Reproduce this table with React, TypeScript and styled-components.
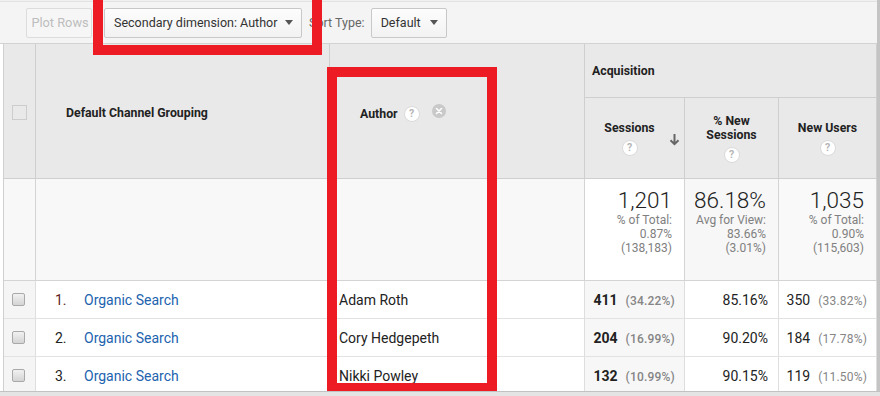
import React from 'react';
import styled, { createGlobalStyle } from 'styled-components';

const Global = createGlobalStyle`
  html, body { margin: 0; padding: 0; background: #fff; }
  body {
    font-family: Roboto, "Liberation Sans", Arial, sans-serif;
    width: 880px; height: 396px; overflow: hidden;
    -webkit-font-smoothing: antialiased;
  }
`;

const Page = styled.div`
  position: relative;
  width: 880px;
  height: 396px;
  overflow: hidden;
  background: #f0f0f0;
`;

const Main = styled.div`
  width: 877px;
  background: #fff;
  height: 396px;
`;

const Toolbar = styled.div`
  margin-top: 1px;
  border-top: 1px solid #e2e2e2;
  border-bottom: 1px solid #d2d2d2;
  height: 41px;
  background: #f4f4f4;
  display: flex;
  align-items: center;
  padding-left: 26px;
`;

const Button = styled.div<{ $w: number; $disabled?: boolean; $ml?: number }>`
  box-sizing: border-box;
  width: ${p => p.$w}px;
  height: 30px;
  margin-left: ${p => p.$ml ?? 0}px;
  border: 1px solid ${p => (p.$disabled ? '#dcdcdc' : '#c8c8c8')};
  border-radius: 2px;
  background: ${p => (p.$disabled ? '#f6f6f6' : 'linear-gradient(#fdfdfd, #f2f2f2)')};
  color: ${p => (p.$disabled ? '#bdbdbd' : '#333')};
  font-size: ${p => (p.$disabled ? '12.8px' : '12.5px')};
  white-space: nowrap;
  display: flex;
  align-items: center;
  justify-content: ${p => (p.$disabled ? 'center' : 'space-between')};
  padding: ${p => (p.$disabled ? '0 0 0 2px' : '0 8px 0 9px')};
`;

const Caret = styled.span`
  width: 0;
  height: 0;
  border-left: 4.5px solid transparent;
  border-right: 4.5px solid transparent;
  border-top: 5px solid #555;
`;

const Label = styled.span`
  margin-left: 7px;
  font-size: 12.5px;
  color: #666;
`;

const Table = styled.table`
  border-collapse: separate;
  border-spacing: 0;
  table-layout: fixed;
  width: 874px;
  margin-left: 3px;
  border-left: 1px solid #d0d0d0;
`;

const Th = styled.th<{ $h?: number; $align?: string; $pl?: number; $pt?: number }>`
  box-sizing: border-box;
  background: #e9e9e9;
  border-right: 1px solid #cfcfcf;
  border-bottom: 1px solid #cfcfcf;
  height: ${p => (p.$h ? `${p.$h}px` : 'auto')};
  text-align: ${p => p.$align ?? 'left'};
  padding: ${p => p.$pt ?? 0}px 0 0 ${p => p.$pl ?? 0}px;
  font-size: 12.3px;
  font-weight: 700;
  color: #222;
  vertical-align: middle;
  position: relative;
`;

const HeadBox = styled.div<{ $pr?: number }>`
  display: flex;
  flex-direction: column;
  align-items: center;
  gap: 5px;
  line-height: 14px;
  padding-right: ${p => p.$pr ?? 0}px;
`;

const AuthorHead = styled.div`
  display: flex;
  align-items: center;
`;

const Help = styled.span<{ $ml?: number }>`
  box-sizing: border-box;
  width: 16px;
  height: 16px;
  border-radius: 50%;
  background: #fff;
  border: 1px solid #dadada;
  color: #b5b5b5;
  font-size: 10.5px;
  font-weight: 700;
  display: inline-flex;
  align-items: center;
  justify-content: center;
  margin-left: ${p => p.$ml ?? 0}px;
`;

const Remove = styled.span`
  width: 14px;
  height: 14px;
  border-radius: 50%;
  background: #c9c9c9;
  display: inline-flex;
  align-items: center;
  justify-content: center;
  margin-left: 12px;
  position: relative;
  top: -3px;
`;

const SortArrow = styled.svg`
  position: absolute;
  right: 4px;
  top: 35px;
`;

const HeadCheck = styled.span`
  display: block;
  box-sizing: border-box;
  width: 15px;
  height: 15px;
  border: 1px solid #cdcdcd;
  margin-left: 8px;
`;

const Td = styled.td<{ $bg?: string; $align?: string; $pl?: number; $pr?: number; $total?: boolean }>`
  box-sizing: border-box;
  background: ${p => p.$bg ?? '#fff'};
  border-right: 1px solid ${p => (p.$total ? '#d4d4d4' : '#dedede')};
  border-bottom: 1px solid ${p => (p.$total ? '#d4d4d4' : '#e2e2e2')};
  text-align: ${p => p.$align ?? 'left'};
  padding: 0 ${p => p.$pr ?? 0}px 0 ${p => p.$pl ?? 0}px;
  vertical-align: ${p => (p.$total ? 'top' : 'middle')};
  font-size: 14px;
  color: #222;
  white-space: nowrap;
  overflow: hidden;
`;

const TotalBig = styled.div`
  font-size: 22.5px;
  font-weight: 300;
  line-height: 26px;
  color: #222;
  margin-top: 8px;
`;

const TotalSub = styled.div`
  font-size: 12px;
  line-height: 14px;
  color: #808080;
`;

const RowCheck = styled.span`
  display: block;
  box-sizing: border-box;
  width: 13px;
  height: 13px;
  border: 1px solid #a9a9a9;
  border-radius: 2px;
  background: linear-gradient(#f1f1f1, #d4d4d4);
  margin-left: 8px;
`;

const Rank = styled.span<{ $c?: string }>`
  display: inline-block;
  width: 29px;
  color: ${p => p.$c ?? '#222'};
`;

const Link = styled.span`
  color: #2163ae;
`;

const Strong = styled.b`
  font-weight: 700;
  color: #222;
`;

const Pct = styled.span<{ $bold?: boolean }>`
  font-size: 12px;
  color: #858585;
  font-weight: ${p => (p.$bold ? 500 : 400)};
  margin-left: 8px;
  letter-spacing: 0.2px;
`;

const Highlight = styled.div<{ $l: number; $t: number; $w: number; $h: number; $bb?: number }>`
  position: absolute;
  left: ${p => p.$l}px;
  top: ${p => p.$t}px;
  width: ${p => p.$w}px;
  height: ${p => p.$h}px;
  box-sizing: border-box;
  border: 10px solid #ed1c24;
  border-bottom-width: ${p => p.$bb ?? 10}px;
  pointer-events: none;
`;

const VScroll = styled.div`
  position: absolute;
  right: 0;
  top: 0;
  width: 3px;
  height: 396px;
  background: #c4c4c4;
`;

const HScroll = styled.div`
  position: absolute;
  left: 0;
  bottom: 0;
  width: 880px;
  height: 4px;
  background: #e4e4e4;
  border-top: 1px solid #c2c2c2;
`;

const rows = [
  { n: '1.', c: '#5e1d1d', author: 'Adam Roth', s: '411', sp: '(34.22%)', nw: '85.16%', u: '350', up: '(33.82%)', h: 38 },
  { n: '2.', c: '#222', author: 'Cory Hedgepeth', s: '204', sp: '(16.99%)', nw: '90.20%', u: '184', up: '(17.78%)', h: 38 },
  { n: '3.', c: '#222', author: 'Nikki Powley', s: '132', sp: '(10.99%)', nw: '90.15%', u: '119', up: '(11.50%)', h: 38 },
];

const totals = [
  { big: '1,201', l1: '% of Total:', l2: '0.87%', l3: '(138,183)', bg: '#fff' },
  { big: '86.18%', l1: 'Avg for View:', l2: '83.66%', l3: '(3.01%)', bg: '#f7f7f7' },
  { big: '1,035', l1: '% of Total:', l2: '0.90%', l3: '(115,603)', bg: '#f9f9f9' },
];

export default function App() {
  return (
    <Page>
      <Global />
      <Main>
        <Toolbar>
          <Button $w={66} $disabled>Plot Rows</Button>
          <Button $w={198} $ml={12}>Secondary dimension: Author<Caret /></Button>
          <Label>Sort Type:</Label>
          <Button $w={76} $ml={6}>Default<Caret /></Button>
        </Toolbar>
        <Table>
          <colgroup>
            <col style={{ width: 32 }} />
            <col style={{ width: 294 }} />
            <col style={{ width: 255 }} />
            <col style={{ width: 100 }} />
            <col style={{ width: 94 }} />
            <col style={{ width: 98 }} />
          </colgroup>
          <thead>
            <tr>
              <Th rowSpan={2} $pt={2}><HeadCheck /></Th>
              <Th rowSpan={2} $pl={30} $pt={4}>Default Channel Grouping</Th>
              <Th rowSpan={2} $pl={30} $pt={5}>
                <AuthorHead>Author<Help $ml={6}>?</Help><Remove>
                  <svg width="8" height="8" viewBox="0 0 8 8"><path d="M1.5 1.5L6.5 6.5M6.5 1.5L1.5 6.5" stroke="#fff" strokeWidth="1.6" strokeLinecap="round" /></svg>
                </Remove></AuthorHead>
              </Th>
              <Th colSpan={3} $h={54} $pl={7}>Acquisition</Th>
            </tr>
            <tr>
              <Th $h={81} $align="center">
                <HeadBox $pr={10}><span>Sessions</span><Help>?</Help></HeadBox>
                <SortArrow width="11" height="13" viewBox="0 0 11 13">
                  <path d="M5.5 1V11M1.5 7.2L5.5 11.2L9.5 7.2" stroke="#666" strokeWidth="2" fill="none" />
                </SortArrow>
              </Th>
              <Th $align="center"><HeadBox><span>% New<br />Sessions</span><Help>?</Help></HeadBox></Th>
              <Th $align="center"><HeadBox><span>New Users</span><Help>?</Help></HeadBox></Th>
            </tr>
          </thead>
          <tbody>
            <tr style={{ height: 102 }}>
              <Td $total $bg="#f8f8f8" />
              <Td $total $bg="#f8f8f8" />
              <Td $total $bg="#f8f8f8" />
              {totals.map(t => (
                <Td key={t.big} $total $bg={t.bg} $align="right" $pr={12}>
                  <TotalBig>{t.big}</TotalBig>
                  <TotalSub>{t.l1}</TotalSub>
                  <TotalSub>{t.l2}</TotalSub>
                  <TotalSub>{t.l3}</TotalSub>
                </Td>
              ))}
            </tr>
            {rows.map(r => (
              <tr key={r.n} style={{ height: r.h }}>
                <Td $bg="#f5f5f5"><RowCheck /></Td>
                <Td $pl={19}><Rank $c={r.c}>{r.n}</Rank><Link>Organic Search</Link></Td>
                <Td $pl={9}>{r.author}</Td>
                <Td $bg="#f7f7f7" $align="right" $pr={9}><Strong>{r.s}</Strong><Pct $bold>{r.sp}</Pct></Td>
                <Td $align="right" $pr={10}>{r.nw}</Td>
                <Td $align="right" $pr={9}>{r.u}<Pct>{r.up}</Pct></Td>
              </tr>
            ))}
          </tbody>
        </Table>
      </Main>
      <VScroll />
      <HScroll />
      <Highlight $l={93} $t={-20} $w={229} $h={75} />
      <Highlight $l={327} $t={67} $w={170} $h={324} $bb={8} />
    </Page>
  );
}
